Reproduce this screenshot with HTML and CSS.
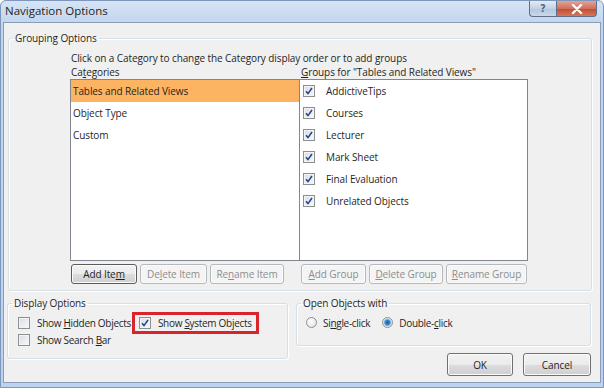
FILE: index.html
```html
<!DOCTYPE html>
<html lang="en">
<head>
    <meta charset="UTF-8">
    <title>Navigation Options</title>
    <link rel="stylesheet" href="styles.css">
</head>
<body>
    <div class="window">
        <div class="titlebar">
            <span class="title">Navigation Options</span>
            <div class="caption">
                <button class="cap-btn help">?</button>
                <button class="cap-btn close">
                    <svg width="12" height="10" viewBox="0 0 12 10"><path d="M2 1 L10 9 M10 1 L2 9" stroke="#fff" stroke-width="2.4" stroke-linecap="round"/></svg>
                </button>
            </div>
        </div>
        <div class="client">
            <fieldset class="group grouping">
                <legend>Grouping Options</legend>
                <div class="grouping-body">
                    <div class="hint">Click on a Category to change the Category display order or to add groups</div>
                    <div class="lists">
                        <div class="col-label">Ca<u>t</u>egories</div>
                        <div class="col-label"><u>G</u>roups for "Tables and Related Views"</div>
                        <ul class="listbox categories">
                            <li class="selected">Tables and Related Views</li>
                            <li>Object Type</li>
                            <li>Custom</li>
                        </ul>
                        <ul class="listbox groups">
                            <li><span class="chk"><svg width="8" height="8" viewBox="0 0 8 8"><path d="M1 4.2 L3 6.6 L7 1" fill="none" stroke="#24418a" stroke-width="1.5"/></svg></span>AddictiveTips</li>
                            <li><span class="chk"><svg width="8" height="8" viewBox="0 0 8 8"><path d="M1 4.2 L3 6.6 L7 1" fill="none" stroke="#24418a" stroke-width="1.5"/></svg></span>Courses</li>
                            <li><span class="chk"><svg width="8" height="8" viewBox="0 0 8 8"><path d="M1 4.2 L3 6.6 L7 1" fill="none" stroke="#24418a" stroke-width="1.5"/></svg></span>Lecturer</li>
                            <li><span class="chk"><svg width="8" height="8" viewBox="0 0 8 8"><path d="M1 4.2 L3 6.6 L7 1" fill="none" stroke="#24418a" stroke-width="1.5"/></svg></span>Mark Sheet</li>
                            <li><span class="chk"><svg width="8" height="8" viewBox="0 0 8 8"><path d="M1 4.2 L3 6.6 L7 1" fill="none" stroke="#24418a" stroke-width="1.5"/></svg></span>Final Evaluation</li>
                            <li><span class="chk"><svg width="8" height="8" viewBox="0 0 8 8"><path d="M1 4.2 L3 6.6 L7 1" fill="none" stroke="#24418a" stroke-width="1.5"/></svg></span>Unrelated Objects</li>
                        </ul>
                        <div class="btn-row">
                            <button class="btn default w-add-item">Add Ite<u>m</u></button>
                            <button class="btn w-del-item" disabled>De<u>l</u>ete Item</button>
                            <button class="btn w-ren-item" disabled>Re<u>n</u>ame Item</button>
                        </div>
                        <div class="btn-row">
                            <button class="btn w-add-group" disabled><u>A</u>dd Group</button>
                            <button class="btn w-del-group" disabled><u>D</u>elete Group</button>
                            <button class="btn w-ren-group" disabled><u>R</u>ename Group</button>
                        </div>
                    </div>
                </div>
            </fieldset>
            <div class="bottom">
                <fieldset class="group display">
                    <legend>Display Options</legend>
                    <div class="opts">
                        <div class="opt-row">
                            <label class="check"><span class="chk"></span><span>Show <u>H</u>idden Objects</span></label>
                            <label class="check sys"><span class="chk"><svg width="8" height="8" viewBox="0 0 8 8"><path d="M1 4.2 L3 6.6 L7 1" fill="none" stroke="#24418a" stroke-width="1.5"/></svg></span><span>Show <u>S</u>ystem Objects</span></label>
                        </div>
                        <div class="opt-row">
                            <label class="check"><span class="chk"></span><span>Show Search <u>B</u>ar</span></label>
                        </div>
                    </div>
                </fieldset>
                <div class="right-col">
                    <fieldset class="group open">
                        <legend>Open Objects with</legend>
                        <div class="radios">
                            <label class="radio"><span class="rad"></span><span>Si<u>n</u>gle-click</span></label>
                            <label class="radio"><span class="rad on"></span><span>Double-<u>c</u>lick</span></label>
                        </div>
                    </fieldset>
                    <div class="dialog-btns">
                        <button class="btn ok">OK</button>
                        <button class="btn cancel">Cancel</button>
                    </div>
                </div>
            </div>
        </div>
    </div>
</body>
</html>
```

FILE: styles.css
```css
* { box-sizing: border-box; }
body {
    margin: 0;
    background: #fff;
    font-family: "Open Sans", sans-serif;
    font-size: 10px;
    letter-spacing: -0.1px;
    color: #1f1f1f;
}
u { text-underline-offset: 1px; }
.window {
    width: 604px;
    height: 388px;
    border: 1px solid #7c97bb;
    border-radius: 6px 6px 0 0;
    background: linear-gradient(180deg, #d6e4f5 0, #c2d6ef 22px, #bcd2ed 100%);
    padding: 0 2px 4px 2px;
    display: flex;
    flex-direction: column;
}
.titlebar {
    height: 21px;
    display: flex;
    justify-content: space-between;
    align-items: flex-start;
}
.title {
    padding: 3px 0 0 2px;
    font-size: 11.5px;
    line-height: 14px;
    letter-spacing: 0;
    color: #1e1e1e;
}
.caption { display: flex; margin-right: 4px; }
.cap-btn {
    height: 16px;
    padding: 0;
    border: 1px solid #5d6f8b;
    border-top: none;
    display: flex;
    align-items: center;
    justify-content: center;
}
.help {
    width: 27px;
    border-right: none;
    border-radius: 0 0 0 4px;
    background: linear-gradient(#e3ebf5, #c3d2e5 50%, #b4c6dd 51%, #c9d8ea);
    color: #52698e;
    font: bold 10px "DejaVu Sans", sans-serif;
}
.close {
    width: 41px;
    border-radius: 0 0 4px 0;
    background: linear-gradient(#e6a393, #d0705c 50%, #c14a33 51%, #d5785a);
}
.client {
    flex: 1;
    background: #f0f0f0;
    border: 1px solid #8a9db7;
    padding: 0 8px 0 3px;
    display: flex;
    flex-direction: column;
}
.group {
    margin: 0;
    min-width: 0;
    border: 1px solid #d5dfe5;
    border-radius: 3px;
    padding: 0 0 0 4px;
    box-shadow: inset 1px 1px 0 #fff, 1px 1px 0 #fff;
}
legend {
    padding: 0 2px;
    line-height: 14px;
}
.grouping {
    margin: 8px 0 0 1px;
    padding-bottom: 6px;
}
.grouping-body { padding: 6px 0 0 57px; }
.hint, .col-label {
    line-height: 14px;
    padding-left: 1px;
}
.lists {
    display: grid;
    grid-template-columns: 230px 228px;
}
.listbox {
    list-style: none;
    margin: 0;
    padding: 0;
    height: 182px;
    background: #fff;
    border: 1px solid #82878f;
}
.listbox li {
    height: 22px;
    line-height: 22px;
    padding-left: 2px;
    display: flex;
    align-items: center;
}
.categories li.selected { background: #fdb462; }
.groups { border-left: none; }
.groups li { padding-left: 3px; }
.groups .chk { margin-right: 11px; }
.chk {
    width: 12px;
    height: 12px;
    flex: none;
    border: 1px solid #8e8f8f;
    background: linear-gradient(135deg, #d9dde3, #f7f9fb);
    box-shadow: inset 0 0 0 1px #f4f4f4;
    margin-right: 7px;
    display: flex;
    align-items: center;
    justify-content: center;
}
.btn-row {
    display: flex;
    gap: 3px;
    margin-top: 3px;
    padding-left: 1px;
}
.btn {
    height: 20px;
    padding: 0;
    font: inherit;
    letter-spacing: inherit;
    color: #1f1f1f;
    border: 1px solid #707070;
    border-radius: 3px;
    background: linear-gradient(#f2f2f2 0, #ebebeb 50%, #dddddd 51%, #cfcfcf 100%);
    box-shadow: inset 0 0 0 1px #fbfbfb;
}
.btn:disabled {
    border-color: #b5b9bd;
    background: #f4f4f4;
    color: #8d8d8d;
}
.btn.default { border-color: #5b5b5b; }
.w-add-item { width: 66px; }
.w-del-item { width: 67px; }
.w-ren-item { width: 74px; }
.w-add-group { width: 65px; }
.w-del-group { width: 74px; }
.w-ren-group { width: 81px; }
.bottom {
    display: grid;
    grid-template-columns: 281px 295px;
    column-gap: 8px;
    margin-top: 5px;
}
.display {
    align-self: start;
    padding-bottom: 10px;
}
.display .opts { padding: 4px 0 0 6px; }
.opt-row {
    display: flex;
    align-items: center;
    height: 17px;
}
.check {
    display: flex;
    align-items: center;
    line-height: 12px;
    letter-spacing: -0.3px;
}
.sys {
    margin-left: 6px;
    padding: 0 2px;
    outline: 3px solid #d8242a;
    outline-offset: 2px;
}
.open { padding-bottom: 14px; }
.radios {
    display: flex;
    align-items: center;
    height: 21px;
    padding: 4px 0 0 5px;
}
.radio {
    display: flex;
    align-items: center;
    margin-right: 12px;
    letter-spacing: -0.3px;
}
.rad {
    width: 11px;
    height: 11px;
    flex: none;
    border-radius: 50%;
    border: 1px solid #8e8f8f;
    background: radial-gradient(circle at 40% 35%, #ffffff, #dedede);
    margin-right: 6px;
}
.rad.on {
    background: radial-gradient(circle, #1d5a98 0, #3f8bd2 2.5px, #a7c9ea 3.5px, #eef2f6 4.5px);
}
.dialog-btns {
    display: flex;
    justify-content: flex-end;
    gap: 10px;
    margin-top: 7px;
}
.ok { width: 66px; height: 23px; }
.cancel { width: 68px; height: 23px; }
```
